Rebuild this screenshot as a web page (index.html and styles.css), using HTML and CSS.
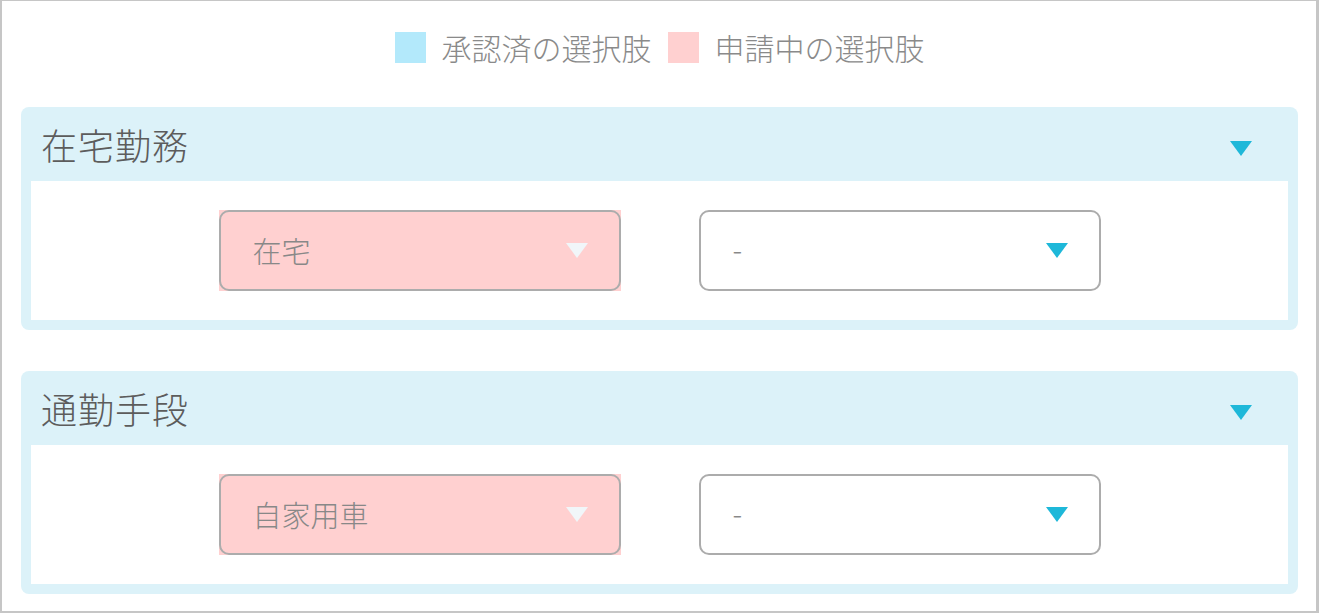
FILE: index.html
```html
<!DOCTYPE html>
<html lang="ja">
<head>
<meta charset="utf-8">
<link rel="stylesheet" href="styles.css">
</head>
<body>
<div class="frame">
  <div class="legend">
    <span class="swatch swatch-approved"></span>
    <span class="legend-text">承認済の選択肢</span>
    <span class="swatch swatch-pending"></span>
    <span class="legend-text">申請中の選択肢</span>
  </div>

  <section class="panel">
    <div class="panel-head">
      <span class="panel-title">在宅勤務</span>
      <span class="tri tri-cyan tri-head"></span>
    </div>
    <div class="panel-body">
      <div class="select pending">
        <div class="select-inner">
          <span class="select-text">在宅</span>
          <span class="tri tri-light"></span>
        </div>
      </div>
      <div class="select">
        <div class="select-inner">
          <span class="select-text dash">-</span>
          <span class="tri tri-cyan"></span>
        </div>
      </div>
    </div>
  </section>

  <section class="panel">
    <div class="panel-head">
      <span class="panel-title">通勤手段</span>
      <span class="tri tri-cyan tri-head"></span>
    </div>
    <div class="panel-body">
      <div class="select pending">
        <div class="select-inner">
          <span class="select-text">自家用車</span>
          <span class="tri tri-light"></span>
        </div>
      </div>
      <div class="select">
        <div class="select-inner">
          <span class="select-text dash">-</span>
          <span class="tri tri-cyan"></span>
        </div>
      </div>
    </div>
  </section>
</div>
</body>
</html>
```

FILE: styles.css
```css
html, body {
  margin: 0;
  padding: 0;
  background: #ffffff;
}

body {
  font-family: "Noto Sans CJK JP", "Noto Sans", sans-serif;
  font-weight: 300;
}

.frame {
  box-sizing: border-box;
  width: 1319px;
  height: 613px;
  border: 2px solid #c6c6c6;
  border-top-width: 1px;
  border-right-width: 3px;
  padding: 31px 18px 0 19px;
  overflow: hidden;
}

.legend {
  display: flex;
  justify-content: center;
  align-items: center;
  height: 31px;
  margin-bottom: 44px;
}

.swatch {
  width: 31px;
  height: 31px;
  flex: none;
}

.swatch-approved {
  background: #b3e9fb;
}

.swatch-pending {
  background: #ffd0d0;
}

.legend-text {
  font-size: 30px;
  color: #8a8a8a;
  line-height: 31px;
  margin: 0 16px 0 16px;
}

.legend-text:last-child {
  margin-right: 0;
}

.panel {
  background: #dcf2f9;
  border-radius: 8px;
  margin-bottom: 41px;
  padding-bottom: 10px;
  overflow: hidden;
}

.panel-head {
  height: 74px;
  display: flex;
  align-items: center;
  justify-content: space-between;
  padding: 0 46px 0 20px;
}

.panel-title {
  font-size: 36px;
  color: #5c5c5c;
  letter-spacing: 1px;
  line-height: 1;
}

.tri-head {
  margin-top: 8px;
}

.panel-body {
  background: #ffffff;
  margin: 0 10px;
  padding: 29px 0 29px;
  display: flex;
  justify-content: center;
  gap: 78px;
}

.select {
  width: 402px;
  height: 81px;
  flex: none;
}

.select.pending {
  background: #ffd0d0;
}

.select-inner {
  box-sizing: border-box;
  height: 100%;
  border: 2px solid #acacac;
  border-radius: 10px;
  display: flex;
  align-items: center;
  justify-content: space-between;
  padding: 0 31px 0 32px;
}

.select-text {
  font-size: 29px;
  color: #888888;
  line-height: 1;
}

.dash {
  margin-top: -4px;
}

.tri {
  width: 0;
  height: 0;
  border-left: 11px solid transparent;
  border-right: 11px solid transparent;
  border-top: 15px solid #1eb8d9;
  flex: none;
}

.tri-light {
  border-top-color: #f1f6f9;
}
```
